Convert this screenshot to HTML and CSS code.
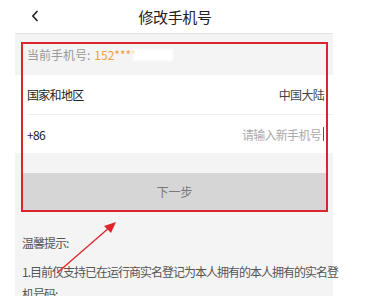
FILE: index.html
```html
<!DOCTYPE html>
<html lang="zh">
<head>
<meta charset="utf-8">
<link rel="stylesheet" href="styles.css">
</head>
<body>
<div class="page">
  <div class="header">
    <span class="back">
      <svg width="8" height="12" viewBox="0 0 8 12"><path d="M6.5 1 L1.8 6 L6.5 11" fill="none" stroke="#222" stroke-width="1.6"/></svg>
    </span>
    <span class="title">修改手机号</span>
  </div>
  <div class="current">当前手机号: <span class="num">152****</span><span class="mask"></span></div>
  <div class="rows">
    <div class="row"><span>国家和地区</span><span class="value">中国大陆</span></div>
    <div class="divider"></div>
    <div class="row"><span>+86</span><span class="placeholder">请输入新手机号<span class="cursor"></span></span></div>
  </div>
  <div class="spacer"></div>
  <div class="button">下一步</div>
  <div class="tips">
    <div class="tip-title">温馨提示:</div>
    <div class="tip-line">1.目前仅支持已在运行商实名登记为本人拥有的本人拥有的实名登</div>
    <div class="tip-line">机号码:</div>
  </div>
  <div class="redbox"></div>
</div>
<svg class="arrow" width="374" height="296" viewBox="0 0 374 296">
  <line x1="57" y1="273" x2="110" y2="227" stroke="#e0242a" stroke-width="1.3"/>
  <polygon points="116,222 104,226 111,233" fill="#e0242a"/>
</svg>
</body>
</html>
```
FILE: styles.css
```css
html, body {
  margin: 0;
  padding: 0;
  background: #ffffff;
  font-family: "Noto Sans CJK SC", "Noto Sans", sans-serif;
}
body {
  width: 374px;
  height: 296px;
  overflow: hidden;
  position: relative;
}
.page {
  margin-left: 15px;
  width: 318px;
  height: 296px;
  background: #f4f4f4;
  position: relative;
}
.header {
  height: 33px;
  background: #ffffff;
  border-bottom: 1px solid #e4e4e4;
  display: flex;
  align-items: center;
  justify-content: center;
  position: relative;
}
.back {
  position: absolute;
  left: 16px;
  top: 10px;
  display: flex;
}
.title {
  font-size: 15px;
  letter-spacing: -0.4px;
  color: #222;
  line-height: 33px;
  padding-left: 2px;
}
.current {
  height: 41px;
  display: flex;
  align-items: center;
  padding-left: 12px;
  font-size: 12px;
  color: #9a9a9a;
}
.num {
  color: #f0a03c;
  margin-left: 4px;
}
.mask {
  display: inline-block;
  width: 40px;
  height: 12px;
  background: #ffffff;
  filter: blur(1px);
  margin-left: -4px;
}
.rows {
  background: #ffffff;
}
.row {
  height: 39px;
  display: flex;
  align-items: center;
  justify-content: space-between;
  padding: 0 9px 0 12px;
  font-size: 12px;
  letter-spacing: -0.7px;
  color: #222;
}
.row + .divider + .row {
  height: 38px;
}
.value {
  color: #444;
}
.placeholder {
  color: #aaa;
  display: flex;
  align-items: center;
}
.cursor {
  display: inline-block;
  width: 1px;
  height: 14px;
  background: #555;
  margin-left: 2px;
}
.divider {
  height: 1px;
  background: #efefef;
  margin-left: 12px;
}
.spacer {
  height: 20px;
}
.button {
  margin: 0 5px 0 6px;
  height: 37px;
  background: #d6d6d6;
  color: #777;
  font-size: 12px;
  display: flex;
  align-items: center;
  justify-content: center;
}
.tips {
  padding: 22px 0 0 7px;
  font-size: 12px;
  letter-spacing: -1px;
  color: #555;
  white-space: nowrap;
}
.tip-title {
  line-height: 22px;
  margin-bottom: 7px;
}
.tip-line {
  line-height: 22px;
}
.redbox {
  position: absolute;
  left: 6px;
  top: 42px;
  width: 303px;
  height: 166px;
  border: 2px solid #d9262c;
}
.arrow {
  position: absolute;
  left: 0;
  top: 0;
}
```
